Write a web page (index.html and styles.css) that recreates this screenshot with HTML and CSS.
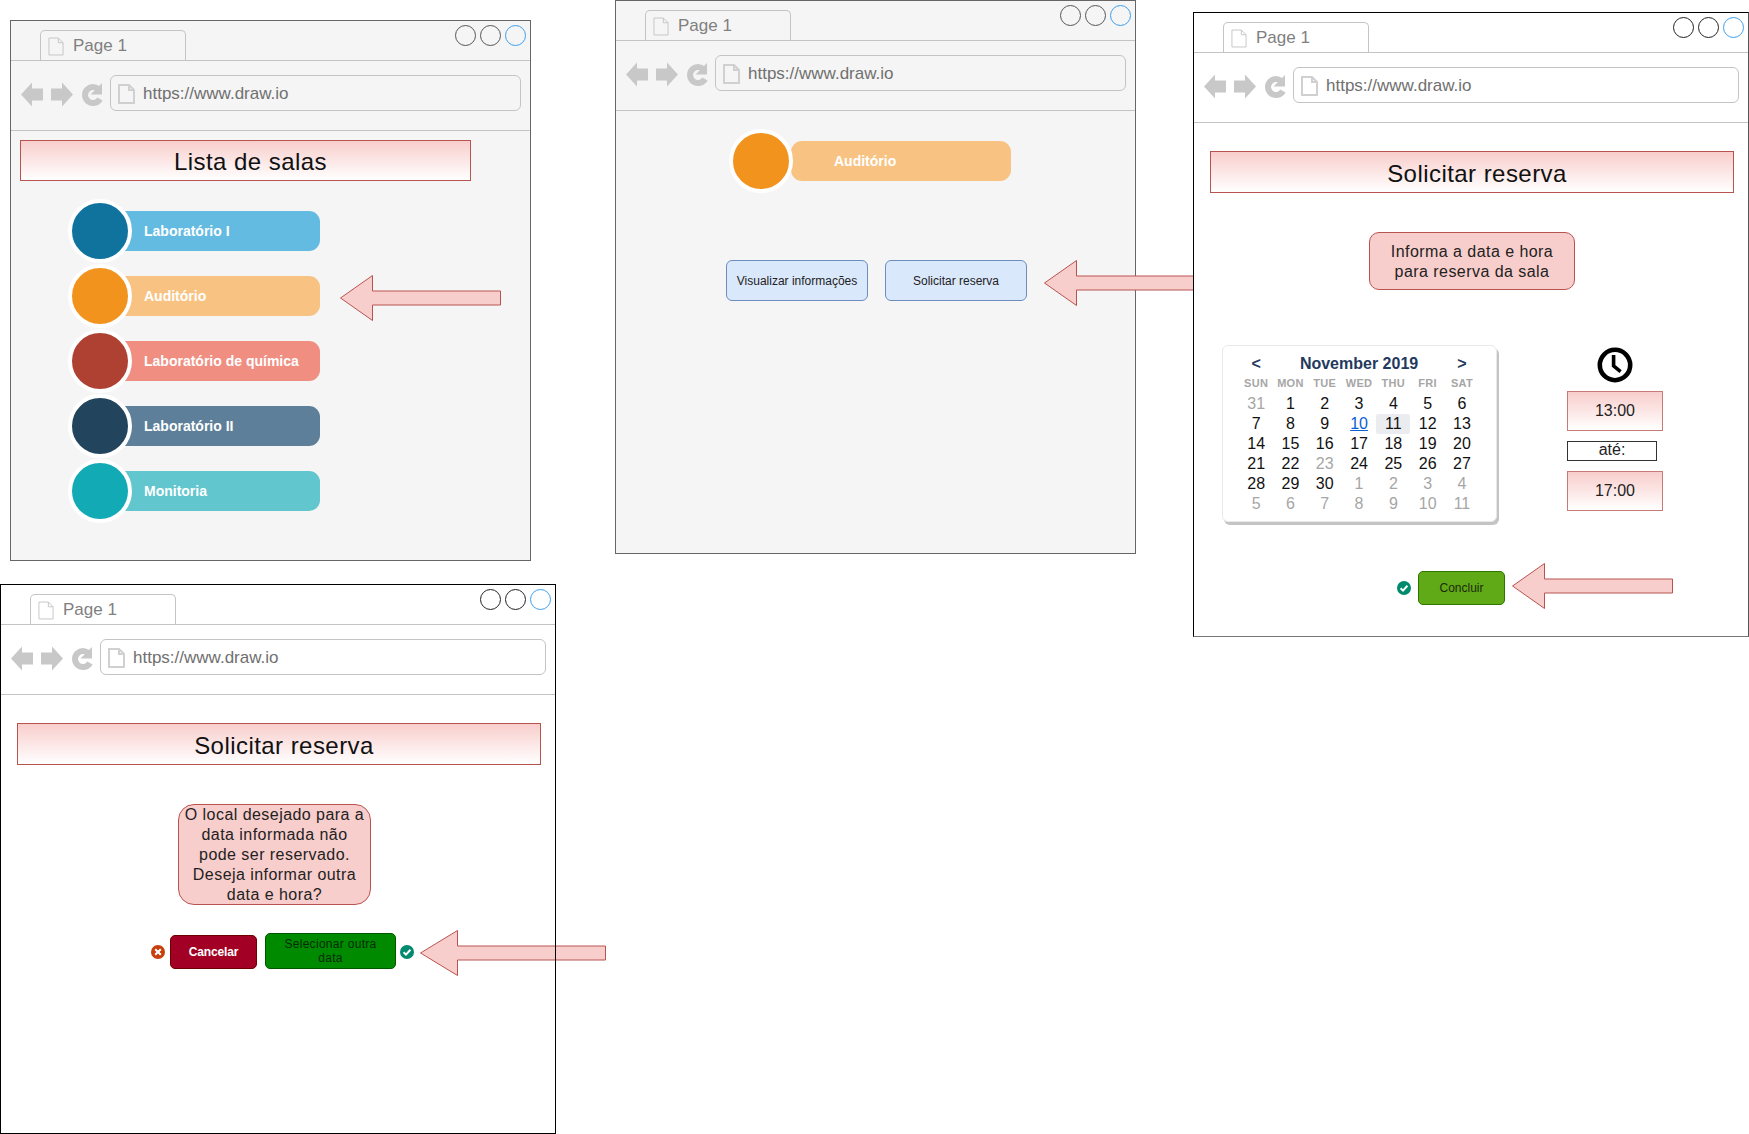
FILE: index.html
```html
<!DOCTYPE html>
<html lang="pt">
<head>
<meta charset="utf-8">
<title>Reserva de salas</title>
<link rel="stylesheet" href="styles.css">
</head>
<body>
<svg class="defs" aria-hidden="true">
  <symbol id="nav" viewBox="0 0 84 26">
    <polygon points="0,12.5 11,0.5 11,6.5 22,6.5 22,18.5 11,18.5 11,24.5" fill="#c8c8c8"/>
    <polygon points="52,12.5 41,0.5 41,6.5 30,6.5 30,18.5 41,18.5 41,24.5" fill="#c8c8c8"/>
    <path d="M78.6 8.5A8 8 0 1 0 79 17" fill="none" stroke="#c8c8c8" stroke-width="6"/>
    <polygon points="81,1 81,12.5 69.5,12.5" fill="#c8c8c8"/>
  </symbol>
  <symbol id="page" viewBox="0 0 17 20">
    <path d="M1 1H11L16 6V19H1Z M11 1V6H16" fill="none" stroke="currentColor"/>
  </symbol>
  <symbol id="ok" viewBox="0 0 14 14">
    <circle cx="7" cy="7" r="7" fill="#008a6e"/>
    <path d="M3.6 7.2L6 9.6L10.4 4.8" fill="none" stroke="#fff" stroke-width="2"/>
  </symbol>
  <symbol id="no" viewBox="0 0 14 14">
    <circle cx="7" cy="7" r="7" fill="#c73f0d"/>
    <path d="M4.2 4.2L9.8 9.8M9.8 4.2L4.2 9.8" fill="none" stroke="#fff" stroke-width="2"/>
  </symbol>
</svg>

<section class="window window-list">
  <div class="tabbar">
    <div class="tab"><svg class="tab-icon"><use href="#page"/></svg><span>Page 1</span></div>
    <div class="dots"><i class="dot"></i><i class="dot"></i><i class="dot dot-blue"></i></div>
  </div>
  <div class="toolbar">
    <svg class="nav"><use href="#nav"/></svg>
    <div class="address"><svg class="address-icon"><use href="#page"/></svg><span>https://www.draw.io</span></div>
  </div>
  <div class="content content-list">
    <h1 class="title title-list">Lista de salas</h1>
    <ul class="rooms">
      <li class="room room-blue"><span class="room-dot"></span><span class="room-bar">Laboratório I</span></li>
      <li class="room room-orange"><span class="room-dot"></span><span class="room-bar">Auditório</span></li>
      <li class="room room-red"><span class="room-dot"></span><span class="room-bar">Laboratório de química</span></li>
      <li class="room room-navy"><span class="room-dot"></span><span class="room-bar">Laboratório II</span></li>
      <li class="room room-teal"><span class="room-dot"></span><span class="room-bar">Monitoria</span></li>
    </ul>
  </div>
</section>

<section class="window window-room">
  <div class="tabbar">
    <div class="tab"><svg class="tab-icon"><use href="#page"/></svg><span>Page 1</span></div>
    <div class="dots"><i class="dot"></i><i class="dot"></i><i class="dot dot-blue"></i></div>
  </div>
  <div class="toolbar">
    <svg class="nav"><use href="#nav"/></svg>
    <div class="address"><svg class="address-icon"><use href="#page"/></svg><span>https://www.draw.io</span></div>
  </div>
  <div class="content content-room">
    <div class="room room-orange room-single"><span class="room-dot"></span><span class="room-bar">Auditório</span></div>
    <div class="choices">
      <div class="choice">Visualizar informações</div>
      <div class="choice">Solicitar reserva</div>
    </div>
  </div>
</section>

<svg class="arrow arrow-room" viewBox="0 0 152 46"><polygon points="0.5,23 32.5,0.5 32.5,16 151.5,16 151.5,30 32.5,30 32.5,45.5"/></svg>

<section class="window window-plain window-form">
  <div class="tabbar">
    <div class="tab"><svg class="tab-icon"><use href="#page"/></svg><span>Page 1</span></div>
    <div class="dots"><i class="dot"></i><i class="dot"></i><i class="dot dot-blue"></i></div>
  </div>
  <div class="toolbar">
    <svg class="nav"><use href="#nav"/></svg>
    <div class="address"><svg class="address-icon"><use href="#page"/></svg><span>https://www.draw.io</span></div>
  </div>
  <div class="content content-form">
    <h1 class="title title-wide">Solicitar reserva</h1>
    <p class="note note-form">Informa a data e hora<br>para reserva da sala</p>
    <div class="booking">
      <div class="calendar">
        <div class="cal-head"><b>&lt;</b><b class="cal-month">November 2019</b><b>&gt;</b></div>
        <div class="cal-grid">
          <span class="wd">SUN</span><span class="wd">MON</span><span class="wd">TUE</span><span class="wd">WED</span><span class="wd">THU</span><span class="wd">FRI</span><span class="wd">SAT</span>
          <span class="off">31</span><span>1</span><span>2</span><span>3</span><span>4</span><span>5</span><span>6</span>
          <span>7</span><span>8</span><span>9</span><span class="link">10</span><span class="today">11</span><span>12</span><span>13</span>
          <span>14</span><span>15</span><span>16</span><span>17</span><span>18</span><span>19</span><span>20</span>
          <span>21</span><span>22</span><span class="off">23</span><span>24</span><span>25</span><span>26</span><span>27</span>
          <span>28</span><span>29</span><span>30</span><span class="off">1</span><span class="off">2</span><span class="off">3</span><span class="off">4</span>
          <span class="off">5</span><span class="off">6</span><span class="off">7</span><span class="off">8</span><span class="off">9</span><span class="off">10</span><span class="off">11</span>
        </div>
      </div>
      <div class="times">
        <svg class="clock" viewBox="0 0 36 36"><circle cx="18" cy="18" r="15.2" fill="none" stroke="#000" stroke-width="4.6"/><path d="M16.6 8V19L23.6 24.6" fill="none" stroke="#000" stroke-width="3.6"/></svg>
        <div class="time">13:00</div>
        <div class="until">até:</div>
        <div class="time">17:00</div>
      </div>
    </div>
    <div class="finish">
      <svg class="state"><use href="#ok"/></svg>
      <div class="btn btn-done">Concluir</div>
    </div>
  </div>
</section>

<svg class="arrow arrow-done" viewBox="0 0 161 46"><polygon points="0.5,23 32.5,0.5 32.5,16 160.5,16 160.5,30 32.5,30 32.5,45.5"/></svg>
<svg class="arrow arrow-retry" viewBox="0 0 186 46"><polygon points="0.5,23 37.5,0.5 37.5,16 185.5,16 185.5,30 37.5,30 37.5,45.5"/></svg>

<section class="window window-plain window-retry">
  <div class="tabbar">
    <div class="tab"><svg class="tab-icon"><use href="#page"/></svg><span>Page 1</span></div>
    <div class="dots"><i class="dot"></i><i class="dot"></i><i class="dot dot-blue"></i></div>
  </div>
  <div class="toolbar">
    <svg class="nav"><use href="#nav"/></svg>
    <div class="address"><svg class="address-icon"><use href="#page"/></svg><span>https://www.draw.io</span></div>
  </div>
  <div class="content content-form">
    <h1 class="title title-wide">Solicitar reserva</h1>
    <p class="note note-retry">O local desejado para a<br>data informada não<br>pode ser reservado.<br>Deseja informar outra<br>data e hora?</p>
    <div class="actions">
      <svg class="state state-low"><use href="#no"/></svg>
      <div class="btn btn-cancel">Cancelar</div>
      <div class="btn btn-other">Selecionar outra<br>data</div>
      <svg class="state state-low"><use href="#ok"/></svg>
    </div>
  </div>
</section>

<svg class="arrow arrow-list" viewBox="0 0 162 46"><polygon points="0.5,23 32.5,0.5 32.5,16 160.5,16 160.5,30 32.5,30 32.5,45.5"/></svg>
</body>
</html>
```
FILE: styles.css
```css
* { box-sizing: border-box; }

html, body { margin: 0; padding: 0; }

body {
  position: relative;
  width: 1749px;
  height: 1134px;
  overflow: hidden;
  background: #fff;
  color: #111;
  font-family: "Liberation Sans", Arial, sans-serif;
}

.defs { position: absolute; width: 0; height: 0; }

/* Windows on the free canvas */
.window {
  position: absolute;
  display: flex;
  flex-direction: column;
  border: 1px solid #666;
  background: #f5f5f5;
}
.window-list { left: 10px; top: 20px; width: 521px; height: 541px; }
.window-room { left: 615px; top: 0; width: 521px; height: 554px; }
.window-plain { border-color: #000; background: none; }
.window-form {
  left: 1193px; top: 12px; width: 556px; height: 625px;
  background: #fff;
  border-right-color: #555;
  border-bottom-color: #777;
}
.window-retry { left: 0; top: 584px; width: 556px; height: 550px; }

/* Browser chrome */
.tabbar {
  display: flex;
  justify-content: space-between;
  align-items: flex-end;
  height: 40px;
  padding: 0 4px 0 29px;
  border-bottom: 1px solid #c4c4c4;
}
.tab {
  display: flex;
  align-items: center;
  gap: 9px;
  width: 146px;
  height: 31px;
  margin-bottom: -1px;
  padding-left: 7px;
  border: 1px solid #c4c4c4;
  border-bottom: 0;
  border-radius: 5px 5px 0 0;
  color: #808080;
  font-size: 17px;
}
.tab-icon { width: 16px; height: 19px; color: #c4c4c4; }
.dots { display: flex; gap: 4px; align-self: flex-start; margin-top: 4px; }
.dot {
  display: block;
  width: 21px;
  height: 21px;
  border: 1px solid #555;
  border-radius: 50%;
}
.window-plain .dot { border-color: #222; }
.window .dot-blue, .window-plain .dot-blue { border-color: #3d9ff0; }

.toolbar {
  display: flex;
  align-items: flex-start;
  gap: 5px;
  height: 70px;
  padding: 14px 9px 0 10px;
  border-bottom: 1px solid #c4c4c4;
}
.nav { flex: none; width: 84px; height: 26px; margin-top: 7px; }
.address {
  display: flex;
  flex: 1;
  align-items: center;
  gap: 8px;
  height: 36px;
  padding: 2px 0 0 7px;
  border: 1px solid #c4c4c4;
  border-radius: 6px;
  color: #707070;
  font-size: 17px;
}
.address-icon { width: 17px; height: 20px; color: #d0d0d0; stroke-width: 2; }

/* Shared content */
.content { display: flex; flex-direction: column; align-items: flex-start; }
.content-list { padding: 9px 0 0 9px; }
.content-room { padding: 17px 0 0 110px; }
.content-form { padding: 28px 0 0 16px; }

.title {
  margin: 0;
  padding-left: 10px;
  border: 1px solid #b85450;
  background: linear-gradient(#f8cecc, #fff);
  color: #111;
  font-size: 24px;
  font-weight: 400;
  letter-spacing: 0.45px;
  text-align: center;
}
.title-list { width: 451px; height: 41px; line-height: 42px; }
.title-wide { width: 524px; height: 42px; line-height: 44px; }

.note {
  margin: 0;
  border: 1px solid #b85450;
  background: #f8cecc;
  color: #222;
  font-size: 16px;
  letter-spacing: 0.45px;
  line-height: 20px;
  text-align: center;
}
.note-form {
  width: 206px;
  height: 58px;
  margin: 39px 0 0 159px;
  padding-top: 9px;
  border-radius: 10px;
}
.note-retry {
  width: 193px;
  height: 101px;
  margin: 39px 0 0 161px;
  border-radius: 16px;
}

/* Room list */
.rooms { margin: 17px 0 0; padding: 0; list-style: none; }
.room {
  display: flex;
  align-items: center;
  height: 65px;
  margin-left: 48px;
}
.room-dot {
  position: relative;
  z-index: 1;
  flex: none;
  width: 64px;
  height: 64px;
  border: 4px solid #fff;
  border-radius: 50%;
}
.room-bar {
  display: flex;
  align-items: center;
  width: 208px;
  height: 40px;
  margin-left: -20px;
  padding-left: 32px;
  border-radius: 11px;
  color: #fff;
  font-size: 14px;
  font-weight: 700;
}
.room-blue .room-dot { background: #10739e; }
.room-blue .room-bar { background: #64bbe2; }
.room-orange .room-dot { background: #f2931e; }
.room-orange .room-bar { background: #f8c382; }
.room-red .room-dot { background: #ae4132; }
.room-red .room-bar { background: #f08e81; }
.room-navy .room-dot { background: #23445d; }
.room-navy .room-bar { background: #5d7f99; }
.room-teal .room-dot { background: #12aab5; }
.room-teal .room-bar { background: #61c6ce; }

.room-single { margin-left: 3px; }
.room-single .room-bar { width: 220px; margin-left: -2px; padding-left: 43px; }

.choices { display: flex; gap: 17px; margin-top: 67px; }
.choice {
  display: flex;
  align-items: center;
  justify-content: center;
  width: 142px;
  height: 41px;
  border: 1px solid #6c8ebf;
  border-radius: 6px;
  background: #dae8fc;
  color: #222;
  font-size: 12px;
}

/* Booking form */
.booking { display: flex; gap: 70px; margin: 55px 0 0 12px; }
.calendar {
  width: 275px;
  height: 177px;
  padding: 8px 0 0 16px;
  border: 1px solid #e9e9e9;
  border-radius: 6px;
  background: #fff;
  box-shadow: 2px 3px 0 #c4c4c4;
}
.cal-head, .cal-grid {
  display: grid;
  grid-template-columns: repeat(7, 34.3px);
  line-height: 20px;
  text-align: center;
}
.cal-head { color: #23395d; font-size: 16px; }
.cal-month { grid-column: 2 / span 5; }
.cal-grid { font-size: 16px; }
.wd {
  margin-bottom: 2px;
  color: #a6a6a6;
  font-size: 11px;
  font-weight: 700;
  letter-spacing: 0.3px;
  line-height: 18px;
}
.off { color: #a6a6a6; }
.link { color: #0b62d6; text-decoration: underline; }
.today { border-radius: 2px; background: #ebecf0; }

.times { display: flex; flex-direction: column; align-items: flex-start; }
.clock { width: 36px; height: 36px; margin: 2px 0 8px 30px; }
.time {
  width: 96px;
  height: 40px;
  border: 1px solid #c77b79;
  background: linear-gradient(#f8cecc, #fff);
  color: #222;
  font-size: 16px;
  line-height: 38px;
  text-align: center;
}
.until {
  width: 90px;
  height: 20px;
  margin: 10px 0;
  border: 1px solid #333;
  color: #222;
  font-size: 16px;
  line-height: 16px;
  text-align: center;
}

.state { flex: none; width: 14px; height: 14px; }
.state-low { margin-top: 2px; }
.btn {
  display: flex;
  align-items: center;
  justify-content: center;
  border-radius: 5px;
  font-size: 12px;
  text-align: center;
}
.finish { display: flex; align-items: center; gap: 7px; margin: 49px 0 0 187px; }
.btn-done {
  width: 87px;
  height: 34px;
  border: 1px solid #2d7600;
  background: #60a917;
  color: #1c2b0a;
}
.actions { display: flex; align-items: center; margin: 28px 0 0 134px; }
.btn-cancel {
  width: 87px;
  height: 34px;
  margin: 2px 8px 0 5px;
  border: 1px solid #6f0000;
  background: #a20025;
  color: #fff;
  font-weight: 700;
  letter-spacing: -0.15px;
}
.btn-other {
  width: 131px;
  height: 36px;
  margin-right: 4px;
  border: 1px solid #005700;
  background: #008a00;
  color: #062b06;
  line-height: 14px;
  letter-spacing: 0.3px;
}

/* Pointer arrows between the mockups */
.arrow { position: absolute; height: 46px; }
.arrow polygon { fill: #f8cecc; stroke: #b85450; }
.arrow-list { left: 340px; top: 275px; width: 162px; }
.arrow-room { left: 1044px; top: 260px; width: 152px; }
.arrow-done { left: 1512px; top: 563px; width: 161px; }
.arrow-retry { left: 420px; top: 930px; width: 186px; }
```
